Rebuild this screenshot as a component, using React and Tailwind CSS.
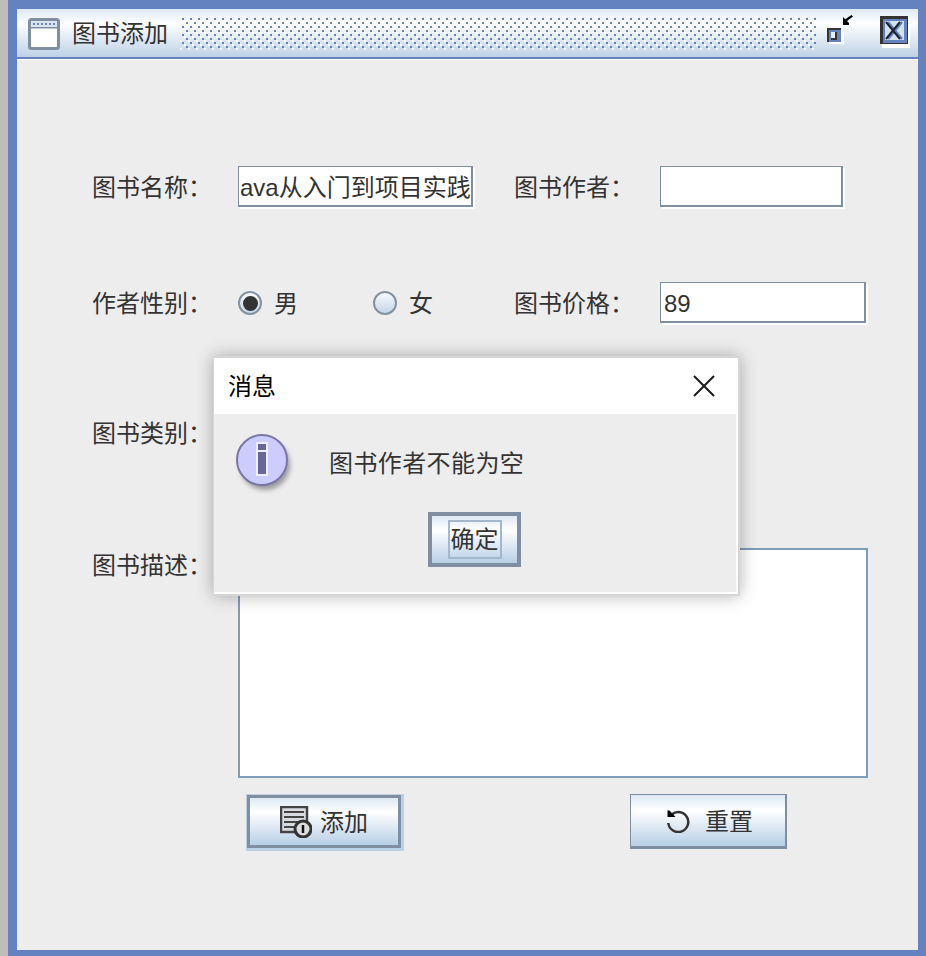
import React from 'react';

const cjk = "font-['Liberation_Sans','Noto_Sans_CJK_SC',sans-serif]";

const FormLabel = ({ children, className = '' }) => (
  <span className={`w-[146px] shrink-0 pt-[2px] text-[24px] leading-none text-[#333333] ${className}`}>{children}</span>
);

const TextField = ({ className = '', children }) => (
  <div className={`h-[41px] self-start bg-white border-t border-l border-[#7f8fa1] shadow-[inset_-2px_-2px_0_#7f8fa1,2px_2px_0_#ffffff] flex items-center overflow-hidden pt-[1px] text-[24px] text-[#333333] whitespace-nowrap ${className}`}>
    {children}
  </div>
);

const Radio = ({ checked }) => (
  <span className="w-[24px] h-[24px] rounded-full border-2 border-[#84929f] bg-gradient-to-b from-[#f8fafc] to-[#c4d6e8] flex items-center justify-center">
    {checked && <span className="w-[15px] h-[15px] rounded-full bg-[#333333]" />}
  </span>
);

const WindowIcon = () => (
  <svg width="32" height="32" viewBox="0 0 32 32" className="mt-[1px]">
    <rect x="1.500" y="1.500" width="29" height="29" rx="2" fill="#ffffff" stroke="#7f8fa1" strokeWidth="3" />
    <rect x="3" y="3" width="26" height="6" fill="#dde6f0" />
    <path d="M5 6h2M9 6h2M13 6h2M17 6h2M21 6h2M25 6h2" stroke="#6382bf" strokeWidth="2" />
    <rect x="3" y="9" width="26" height="1.500" fill="#7f8fa1" />
  </svg>
);

const Bumps = () => (
  <svg width="636" height="34" className="shrink-0">
    <defs>
      <pattern id="bumps" width="8" height="8" patternUnits="userSpaceOnUse">
        <rect x="0" y="0" width="2" height="2" fill="#ffffff" />
        <rect x="4" y="4" width="2" height="2" fill="#ffffff" />
        <rect x="2" y="2" width="2" height="2" fill="#6382bf" />
        <rect x="6" y="6" width="2" height="2" fill="#6382bf" />
      </pattern>
    </defs>
    <rect width="636" height="34" fill="url(#bumps)" />
  </svg>
);

const MinimizeIcon = () => (
  <svg width="30" height="36" viewBox="0 0 30 36">
    <rect x="3" y="15" width="15" height="14" fill="#ffffff" />
    <rect x="1" y="13" width="14" height="14" fill="#6382bf" />
    <path d="M1 27V13h14v2H3v12z" fill="#333333" />
    <rect x="5" y="17" width="6" height="6" fill="#e8eef6" />
    <path d="M11 17v8H5v-2h4v-6z" fill="#333333" />
    <path d="M17 10V2l2.200 2.200L25.500 0 27 1.500 21 6l2 2v2z" fill="#000000" />
  </svg>
);

const CloseIcon = () => (
  <svg width="30" height="34" viewBox="0 0 30 34">
    <rect x="2" y="2" width="28" height="30" fill="#ffffff" />
    <rect x="0" y="0" width="28" height="28" fill="#333333" />
    <rect x="3" y="3" width="24" height="24" fill="#6382bf" />
    <rect x="5" y="5" width="19" height="19" fill="#d3e0ee" />
    <path d="M8 6l14 17M22 6L8 23" stroke="#6382bf" strokeWidth="2.500" />
    <path d="M6 6l14 17M20 6L6 23" stroke="#1d2530" strokeWidth="2" />
  </svg>
);

const InfoIcon = () => (
  <svg width="60" height="62" viewBox="0 0 60 62">
    <defs>
      <filter id="soft" x="-30%" y="-30%" width="160%" height="160%">
        <feGaussianBlur stdDeviation="2.500" />
      </filter>
    </defs>
    <circle cx="29" cy="31" r="25" fill="#555555" opacity="0.55" filter="url(#soft)" />
    <circle cx="26" cy="26" r="25" fill="#ccccff" stroke="#7a76a8" strokeWidth="2" />
    <rect x="20" y="8" width="12" height="34" fill="#eeeeff" />
    <rect x="22" y="10" width="8" height="6" fill="#666699" />
    <rect x="22" y="18" width="8" height="22" fill="#666699" />
  </svg>
);

const AddIcon = () => (
  <svg width="32" height="32" viewBox="0 0 32 32">
    <rect x="1" y="1" width="26" height="25" fill="#d8dce0" stroke="#444444" strokeWidth="2.500" />
    <path d="M4 6h20M4 11h20M4 16h14M4 21h10" stroke="#444444" strokeWidth="2" />
    <circle cx="23" cy="23" r="8" fill="#dddddd" stroke="#333333" strokeWidth="3" />
    <path d="M23 19v8" stroke="#111111" strokeWidth="2.500" />
  </svg>
);

const ResetIcon = () => (
  <svg width="24" height="24" viewBox="0 0 24 24" fill="none">
    <path d="M6 5.200A10 10 0 1 1 2.300 14" stroke="#333333" strokeWidth="2.500" />
    <path d="M1.500 1.500h2l6 6.500H1.500z" fill="#000000" />
  </svg>
);

const App = () => {
  return (
    <div className={`relative w-[926px] h-[956px] flex overflow-hidden bg-[#bdbdbd] ${cjk}`}>
      <div className="w-[8px] shrink-0" />

      {/* Window frame */}
      <div className="flex-1 flex flex-col bg-[#ededed] border-t-[9px] border-l-[9px] border-r-[8px] border-b-[6px] border-[#6382bf]">
        <div className="h-[48px] shrink-0 flex items-center pl-[11px] pr-[8px] bg-gradient-to-b from-[#dde8f3] via-[#ffffff] via-30% to-[#bed1e6]">
          <WindowIcon />
          <span className="ml-[12px] shrink-0 pt-[1px] text-[24px] leading-none text-[#333333] whitespace-nowrap">图书添加</span>
          <div className="ml-[12px] flex"><Bumps /></div>
          <div className="ml-[10px] flex"><MinimizeIcon /></div>
          <div className="ml-[24px] flex"><CloseIcon /></div>
        </div>
        <div className="h-[2px] bg-[#6382bf] shrink-0" />
        <div className="h-[1px] bg-white shrink-0" />

        {/* Form */}
        <div className="flex-1 flex flex-col pl-[75px] pt-[106px]">
          <div className="flex items-center h-[42px]">
            <FormLabel>图书名称：</FormLabel>
            <TextField className="w-[235px] pl-[1px]">ava从入门到项目实践</TextField>
            <FormLabel className="ml-[41px]">图书作者：</FormLabel>
            <TextField className="w-[183px]" />
          </div>

          <div className="flex items-center h-[42px] mt-[74px]">
            <FormLabel>作者性别：</FormLabel>
            <div className="w-[135px] flex items-center gap-[12px] text-[24px] leading-none text-[#333333]">
              <Radio checked />
              <span className="pt-[2px]">男</span>
            </div>
            <div className="w-[141px] flex items-center gap-[12px] text-[24px] leading-none text-[#333333]">
              <Radio />
              <span className="pt-[2px]">女</span>
            </div>
            <FormLabel>图书价格：</FormLabel>
            <TextField className="w-[206px] pl-[3px]">89</TextField>
          </div>

          <div className="flex items-center h-[42px] mt-[88px]">
            <FormLabel>图书类别：</FormLabel>
          </div>

          <div className="flex items-start mt-[94px]">
            <FormLabel className="mt-[4px]">图书描述：</FormLabel>
            <div className="w-[630px] h-[230px] bg-white border-2 border-[#7f9cba]" />
          </div>

          <div className="flex items-start mt-[16px] pl-[155px]">
            <button className="mt-[1px] w-[154px] h-[53px] flex items-center justify-center gap-[8px] border-[3px] border-[#7f8fa1] shadow-[1px_1px_0_2px_#bcd0e4] bg-gradient-to-b from-[#dde8f3] via-[#ffffff] via-30% to-[#b8cfe5] text-[24px] leading-none text-[#333333]">
              <AddIcon />
              <span className="pt-[2px]">添加</span>
            </button>
            <button className="ml-[229px] w-[157px] h-[55px] flex items-center justify-center gap-[15px] pl-[3px] border border-b-[3px] border-r-[2px] border-[#7f8fa1] bg-gradient-to-b from-[#dde8f3] via-[#ffffff] via-30% to-[#b8cfe5] text-[24px] leading-none text-[#333333]">
              <ResetIcon />
              <span className="pt-[2px]">重置</span>
            </button>
          </div>
        </div>
      </div>

      {/* Message dialog */}
      <div className="absolute left-[213px] top-[356px] w-[527px] h-[240px] flex flex-col bg-[#ededed] border-2 border-l-[1px] border-[#d6d6d6] shadow-[0_0_16px_rgba(0,0,0,0.3)]">
        <div className="h-[56px] shrink-0 flex items-center justify-between pl-[14px] pr-[23px] bg-white">
          <span className="pt-[2px] text-[24px] leading-none text-black">消息</span>
          <svg width="22" height="22" viewBox="0 0 22 22">
            <path d="M1 1l20 20M21 1L1 21" stroke="#1a1a1a" strokeWidth="2" />
          </svg>
        </div>
        <div className="flex-1 flex flex-col border-r-2 border-b-2 border-white">
          <div className="flex items-start pl-[22px] pt-[20px]">
            <InfoIcon />
            <span className="ml-[33px] mt-[18px] text-[24px] leading-none text-[#333333] tracking-[0.4px]">图书作者不能为空</span>
          </div>
          <button className="self-start ml-[214px] mt-[16px] w-[93px] h-[55px] flex items-center justify-center border-[4px] border-[#7f8fa1] bg-gradient-to-b from-[#dde8f3] via-[#ffffff] via-30% to-[#b8cfe5]">
            <span className="w-[54px] h-[39px] flex items-center justify-center border-2 border-[#a3b8cc] text-[24px] leading-none text-[#333333]">确定</span>
          </button>
        </div>
      </div>
    </div>
  );
};

export default App;
